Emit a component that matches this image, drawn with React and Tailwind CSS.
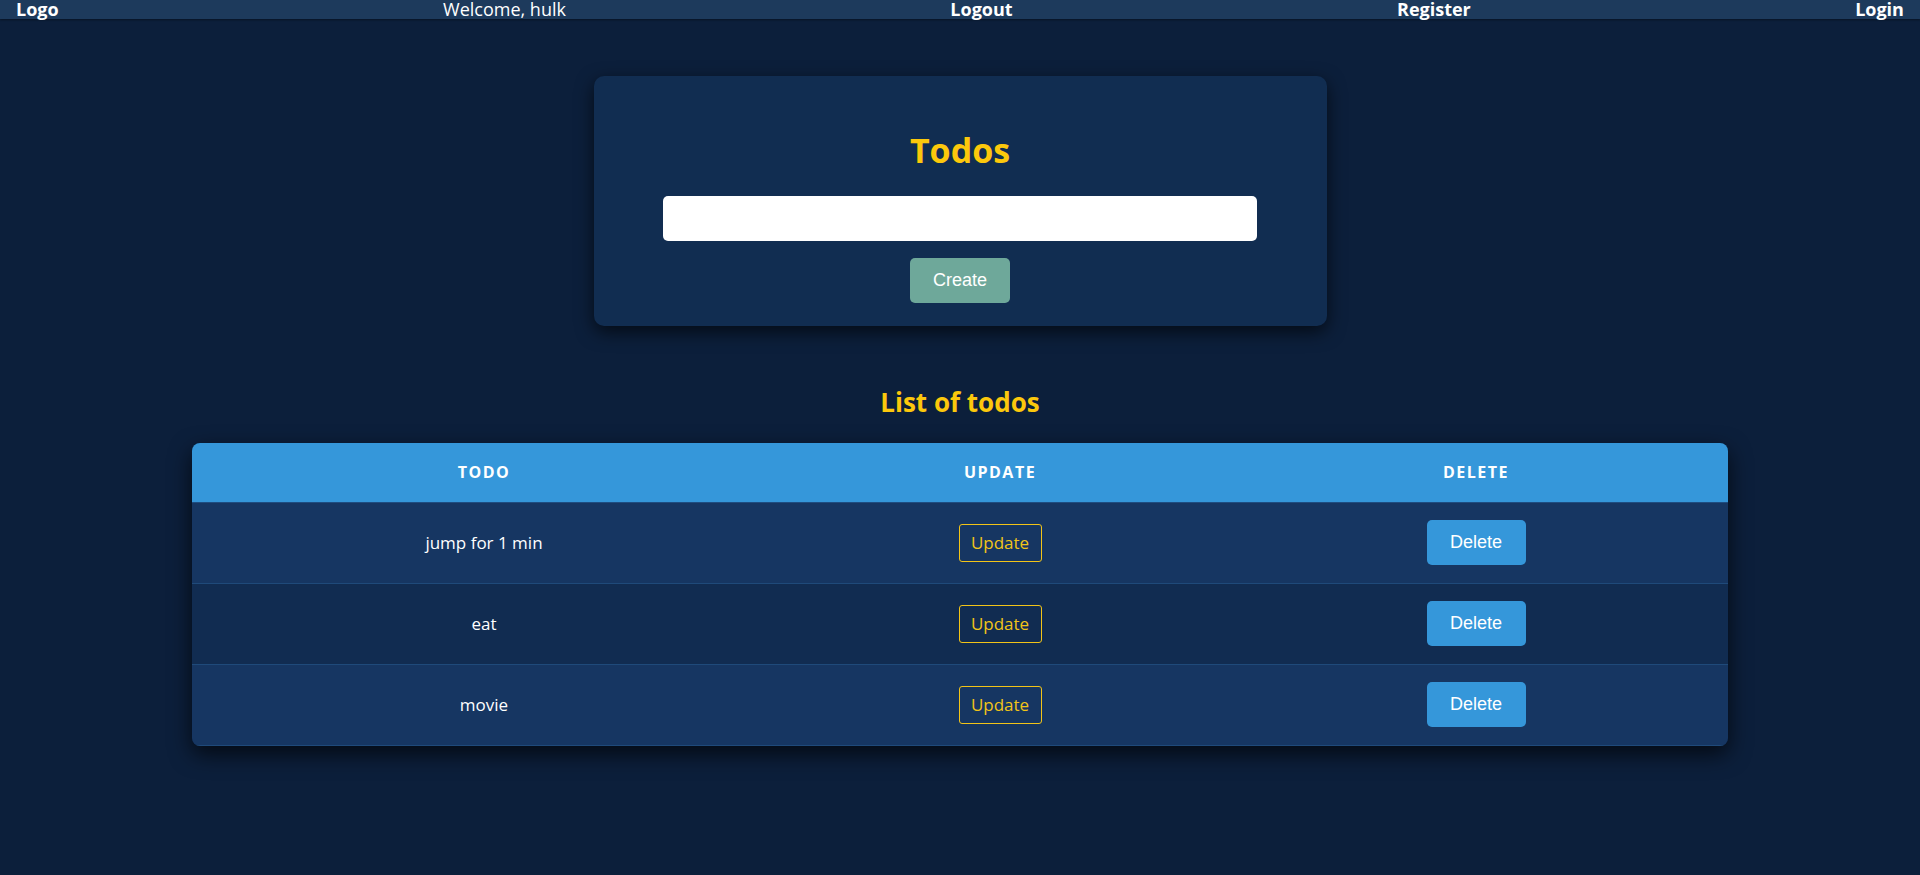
import { useState } from "react";

const todos = [
  { id: 1, title: "jump for 1 min" },
  { id: 2, title: "eat" },
  { id: 3, title: "movie" },
];

const App = () => {
  const [text, setText] = useState("");

  return (
    <div className="min-h-screen bg-[#0c1f3b] font-['Open_Sans',sans-serif] text-white">
      {/* navbar */}
      <nav className="h-[19px] bg-[#1d3a5c] px-4 flex justify-between items-center text-[18px] leading-[19px] shadow-[0_1px_2px_rgba(0,0,0,0.4)]">
        <span className="font-bold">Logo</span>
        <span>Welcome, hulk</span>
        <span className="font-bold">Logout</span>
        <span className="font-bold">Register</span>
        <span className="font-bold">Login</span>
      </nav>

      <main className="flex flex-col items-center">
        <div className="mt-[57px] w-[733px] h-[250px] rounded-[10px] bg-[#112d51] shadow-[0_6px_18px_rgba(0,0,0,0.65)] flex flex-col items-center pt-[52px]">
          <h1 className="text-[34px] leading-[44px] font-bold text-[#fcc80c]">Todos</h1>
          <input
            value={text}
            onChange={(e) => setText(e.target.value)}
            className="mt-[24px] w-[594px] h-[45px] rounded-[5px] bg-white px-3 text-black outline-none"
          />
          <button className="mt-[17px] w-[100px] h-[45px] rounded-[5px] bg-[#6ea89a] text-white text-[18px] font-['Liberation_Sans',Arial,sans-serif]">
            Create
          </button>
        </div>

        <h2 className="mt-[58px] text-[26px] leading-[36px] font-bold text-[#fcc80c]">List of todos</h2>

        <div className="mt-[23px] w-[1536px] rounded-[8px] overflow-hidden shadow-[0_8px_22px_rgba(0,0,0,0.7)]">
          <table className="w-full table-fixed border-collapse">
            <colgroup>
              <col className="w-[584px]" />
              <col className="w-[448px]" />
              <col className="w-[504px]" />
            </colgroup>
            <thead>
              <tr className="h-[59px] bg-[#3597da] border-b border-[#1f4d80]">
                <th className="text-[16px] font-bold uppercase tracking-[1.5px]">Todo</th>
                <th className="text-[16px] font-bold uppercase tracking-[1.5px]">Update</th>
                <th className="text-[16px] font-bold uppercase tracking-[1.5px]">Delete</th>
              </tr>
            </thead>
            <tbody>
              {todos.map((todo, i) => (
                <tr
                  key={todo.id}
                  className={`h-[81px] border-b border-[#1f4a7a] ${i % 2 === 0 ? "bg-[#163662]" : "bg-[#112c51]"}`}
                >
                  <td className="text-center text-[17px]">{todo.title}</td>
                  <td className="text-center">
                    <button className="w-[83px] h-[38px] rounded-[3px] border border-[#f2c418] text-[#f2c418] text-[17px]">
                      Update
                    </button>
                  </td>
                  <td className="text-center">
                    <button className="w-[99px] h-[45px] rounded-[5px] bg-[#3597da] text-white text-[18px] font-['Liberation_Sans',Arial,sans-serif]">
                      Delete
                    </button>
                  </td>
                </tr>
              ))}
            </tbody>
          </table>
        </div>
      </main>
    </div>
  );
};

export default App;
